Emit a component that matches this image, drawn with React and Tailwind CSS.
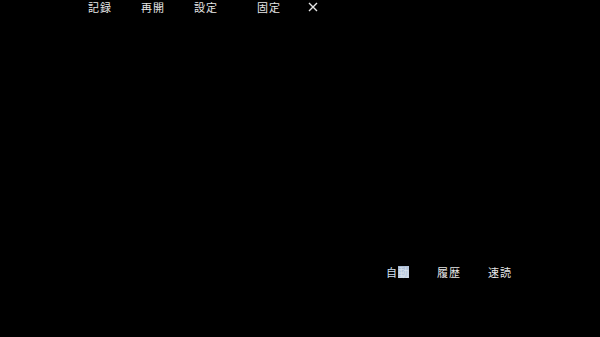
export default function App() {
  const font = { fontFamily: '"Noto Sans CJK JP", "Noto Sans", sans-serif' };
  return (
    <div className="relative h-[337px] w-[600px] overflow-hidden bg-black text-[#e6e6e6]" style={font}>
      <div className="flex h-[13px] items-center pl-[88px] pt-[1px] text-[11px] leading-[12px]">
        <span className="tracking-[1px]">記録</span>
        <span className="ml-[29px] tracking-[1px]">再開</span>
        <span className="ml-[29px] tracking-[1px]">設定</span>
        <span className="ml-[39px] tracking-[1px]">固定</span>
        {/* close */}
        <svg className="ml-[27px]" width="10" height="10" viewBox="0 0 10 10" fill="none" stroke="#e6e6e6" strokeWidth="1.4">
          <path d="M1 1L9 9M9 1L1 9" />
        </svg>
      </div>
      <div className="mt-[252px] flex h-[14px] items-center pl-[386px] text-[11px] leading-[12px]">
        <span className="flex items-center">
          <span className="text-[#d2e0f2]">自</span>
          <span className="ml-[1px] bg-gradient-to-br from-[#9fb3cf] to-[#c9d5e5] text-[#d6e0ec]">動</span>
        </span>
        <span className="ml-[28px] tracking-[1px]">履歴</span>
        <span className="ml-[27px] tracking-[1px]">速読</span>
      </div>
    </div>
  );
}
